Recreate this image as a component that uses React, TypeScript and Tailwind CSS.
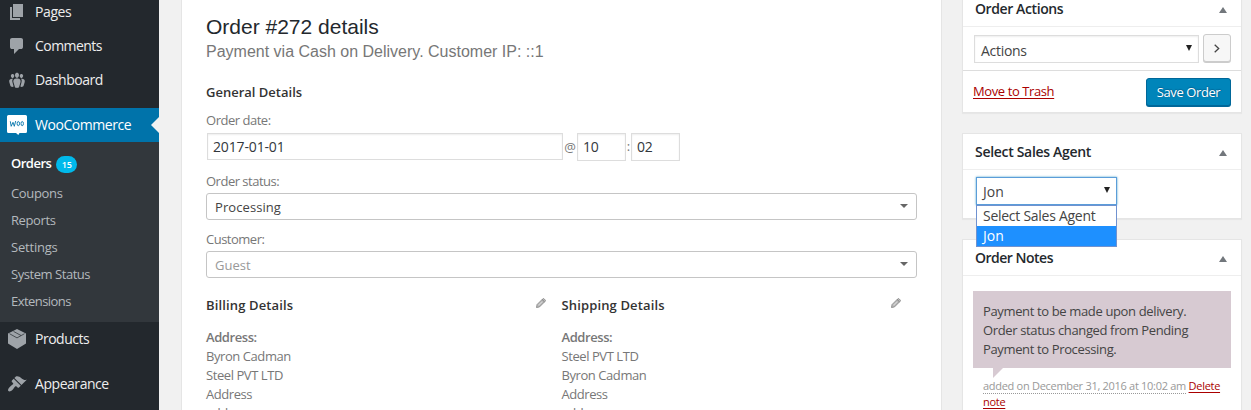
import type { ReactNode } from "react";

const menuText = "font-['Open_Sans',sans-serif] text-[14px] leading-[18px] text-[#eee]";

function Dash({ d, className = "" }: { d: string[]; className?: string }) {
  return (
    <svg viewBox="0 0 20 20" className={`h-5 w-5 shrink-0 ${className}`} fill="#9ea3a8">
      {d.map((p) => (
        <path key={p} d={p} />
      ))}
    </svg>
  );
}

function MenuRow({ icon, label, tracking }: { icon: ReactNode; label: string; tracking: string }) {
  return (
    <div className="flex h-[34px] shrink-0 items-center pl-[7px]">
      {icon}
      <span className={`ml-2 ${menuText} ${tracking}`}>{label}</span>
    </div>
  );
}

const PAGES = ["M6 15V2h10v13H6zm-1 1h8v2H3V5h2v11z"];
const COMMENTS = [
  "M5 2h9q.82 0 1.41.59T16 4v7q0 .82-.59 1.41T14 13h-2l-5 5v-5H5q-.82 0-1.41-.59T3 11V4q0-.82.59-1.41T5 2z",
];
const GROUPS = [
  "M8.03 4.46c-.29 1.28.55 3.46 1.97 3.46 1.41 0 2.25-2.18 1.96-3.46-.22-.98-1.08-1.63-1.96-1.63-.89 0-1.74.65-1.97 1.63z",
  "M3.9 5.36c-.25 1.08.47 2.93 1.67 2.93s1.92-1.85 1.67-2.93c-.19-.83-.92-1.39-1.67-1.39s-1.48.56-1.67 1.39z",
  "M12.76 5.36c-.25 1.08.47 2.93 1.66 2.93 1.2 0 1.92-1.85 1.67-2.93-.19-.83-.92-1.39-1.67-1.39-.74 0-1.47.56-1.66 1.39z",
  "M12.17 16.79l1.25-4.3C14.2 10 12.71 8.47 10 8.47c-2.72 0-4.21 1.53-3.44 4.02l1.26 4.3C8.05 17.51 9 18 10 18c.98 0 1.94-.49 2.17-1.21z",
  "M6.1 8.85C5 9.8 5.2 11.3 5.6 12.7l1.05 3.8c-.4.3-.9.4-1.4.4-.85 0-1.65-.41-1.85-1.03l-1.07-3.65c-.65-2.11.61-3.4 2.92-3.4.3 0 .6 0 .85.03z",
  "M13.9 8.85c1.1.95.9 2.45.5 3.85l-1.05 3.8c.4.3.9.4 1.4.4.85 0 1.65-.41 1.85-1.03l1.07-3.65c.65-2.11-.61-3.4-2.92-3.4-.3 0-.6 0-.85.03z",
];
const BRUSH = [
  "M14.48 11.06L7.41 3.99l1.5-1.5c.5-.56 2.3-.47 3.51.32 1.21.8 1.43 1.28 2.91 2.1 1.18.64 2.45 1.26 4.45.85z",
  "M13.77 11.77L6.7 4.7 4.93 6.47c-.39.39-.39 1.02 0 1.41l1.06 1.06c.39.39.39 1.03 0 1.42-.6.6-1.43 1.11-2.21 1.69-.35.26-.7.53-1.01.84C1.43 14.23.4 16.08 1.4 17.07c.99 1 2.84-.03 4.18-1.36.31-.31.58-.66.85-1.02.57-.78 1.08-1.61 1.69-2.21.39-.39 1.02-.39 1.41 0l1.06 1.06c.39.39 1.02.39 1.41 0z",
];

function WooIcon() {
  return (
    <svg viewBox="0 0 20 20" className="h-5 w-5 shrink-0">
      <path d="M1.500 0h17a1.500 1.500 0 0 1 1.500 1.500v15a1.500 1.500 0 0 1-1.500 1.500H12.500l-1.200 2-2.300-2H1.500A1.500 1.500 0 0 1 0 16.500v-15A1.500 1.500 0 0 1 1.500 0z" fill="#fff" />
      <path d="M3.300 6.300l.9 5 1.800-4 1.300 4 1.400-5.300" fill="none" stroke="#0073aa" strokeWidth=".9" />
      <ellipse cx="11.300" cy="8.600" rx="1.200" ry="2.100" fill="none" stroke="#0073aa" strokeWidth=".9" />
      <ellipse cx="15.200" cy="8.600" rx="1.200" ry="2.100" fill="none" stroke="#0073aa" strokeWidth=".9" />
    </svg>
  );
}

function BoxIcon() {
  return (
    <svg viewBox="0 0 20 22" className="h-[22px] w-5 shrink-0">
      <path d="M10 1l9 4.500v10L10 21l-9-5.500v-10z" fill="#9ea3a8" />
      <path d="M2.500 5.700L10 9.900l7.500-4.200M6.500 3.400l7.500 4.100" fill="none" stroke="#23282d" strokeWidth=".7" />
    </svg>
  );
}

function Pencil() {
  return (
    <svg viewBox="0 0 10 10" className="h-[10px] w-[10px]">
      <path d="M.5 9.500l.6-3L6.600 1l1-.6 2 2-.6 1L3.500 8.900z" fill="#bbb" stroke="#888" strokeWidth=".9" />
      <path d="M6.100 1.500l2.400 2.400" stroke="#777" strokeWidth=".9" />
      <path d="M2.500 7.300L6 3.800" stroke="#eee" strokeWidth=".6" />
    </svg>
  );
}

const subs: [string, string][] = [
  ["Coupons", "tracking-[-0.35px]"],
  ["Reports", "tracking-[-0.4px]"],
  ["Settings", "tracking-[-0.2px]"],
  ["System Status", "tracking-[-0.45px]"],
  ["Extensions", "tracking-[-0.55px]"],
];

function Sidebar() {
  return (
    <nav className="flex w-[159px] shrink-0 flex-col overflow-hidden bg-[#23282d]">
      <div className="-mt-[5px] flex flex-col">
        <MenuRow icon={<Dash d={PAGES} />} label="Pages" tracking="tracking-[-0.4px]" />
        <MenuRow icon={<Dash d={COMMENTS} />} label="Comments" tracking="tracking-[-0.55px]" />
        <MenuRow icon={<Dash d={GROUPS} />} label="Dashboard" tracking="tracking-[-0.5px]" />
      </div>
      <div className="mt-[11px] flex h-[34px] shrink-0 items-center justify-between bg-[#0073aa] pl-[7px]">
        <WooIcon />
        <span className={`mr-auto ml-2 ${menuText} tracking-[-0.45px] text-white`}>WooCommerce</span>
        <svg viewBox="0 0 8 16" className="h-4 w-2">
          <path d="M8 0v16L0 8z" fill="#f1f1f1" />
        </svg>
      </div>
      <div className="flex h-[180px] shrink-0 flex-col bg-[#32373c] pt-2 pl-[11px] font-['Open_Sans',sans-serif] text-[13px] leading-[27px] text-[#b4b9be]">
        <div className="mb-px flex h-[29px] items-center">
          <span className="-mt-0.5 font-semibold tracking-[-0.5px] text-white">Orders</span>
          <span className="ml-[5px] flex h-[17px] w-[21px] items-center justify-center rounded-full bg-[#00b9eb] text-[9px] font-semibold text-white">15</span>
        </div>
        {subs.map(([s, t]) => (
          <div key={s} className={`h-[27px] ${t}`}>
            {s}
          </div>
        ))}
      </div>
      <MenuRow icon={<BoxIcon />} label="Products" tracking="tracking-[-0.5px]" />
      <div className="h-[11px] shrink-0" />
      <MenuRow icon={<Dash d={BRUSH} />} label="Appearance" tracking="tracking-[-0.45px]" />
    </nav>
  );
}

function SelectBox({ text, className }: { text: string; className: string }) {
  return (
    <div className={`flex h-[27px] w-[711px] items-center justify-between rounded-[3px] border border-[#c5c5c5] bg-white pr-2 pl-2 ${className}`}>
      <span className="pt-0.5">{text}</span>
      <svg viewBox="0 0 8 4" className="mb-px h-1 w-2">
        <path d="M0 0h8L4 4z" fill="#666" />
      </svg>
    </div>
  );
}

const inputBox = "flex items-center border border-[#ddd] bg-white px-[5px] text-[14px] tracking-[-0.15px] text-[#32373c] shadow-[inset_0_1px_2px_rgba(0,0,0,0.07)]";

function Address({ title, lines, className }: { title: string; lines: string[]; className: string }) {
  return (
    <section className={className}>
      <div className="flex h-[18px] items-center justify-between">
        <h4 className="pt-0.5 text-[13px] font-semibold tracking-[0.14px] text-[#333]">{title}</h4>
        <span className="-mt-1">
          <Pencil />
        </span>
      </div>
      <div className="mt-[14px] leading-[19px] tracking-[-0.43px]">
        <div className="font-semibold">Address:</div>
        {lines.map((l, i) => (
          <div key={i}>{l}</div>
        ))}
      </div>
    </section>
  );
}

function OrderPanel() {
  return (
    <main className="ml-[22px] w-[761px] shrink-0 overflow-hidden border-x border-[#e5e5e5] bg-white pl-6 font-['Open_Sans',sans-serif] text-[13px] text-[#777]">
      <h2 className="mt-[14px] font-['Liberation_Sans',sans-serif] text-[21px] leading-[26px] text-[#23282d]">Order #272 details</h2>
      <p className="mt-px font-['Liberation_Sans',sans-serif] text-[16px] leading-[22px] text-[#777]">Payment via Cash on Delivery. Customer IP: ::1</p>
      <h4 className="mt-5 text-[13px] leading-[18px] font-semibold text-[#333]">General Details</h4>
      <div className="mt-[10px] leading-[18px] tracking-[-0.48px]">Order date:</div>
      <div className="mt-1 ml-px flex h-7 items-start">
        <div className={`${inputBox} h-[27px] w-[356px]`}>2017-01-01</div>
        <span className="w-[14px] pt-[5px] text-center">@</span>
        <div className={`${inputBox} h-7 w-[49px] pb-px`}>10</div>
        <span className="w-[5px] pt-1 text-center">:</span>
        <div className={`${inputBox} h-7 w-[49px] pb-px`}>02</div>
      </div>
      <div className="mt-[11px] leading-[18px] tracking-[-0.5px]">Order status:</div>
      <SelectBox text="Processing" className="mt-[3px] text-[#444] tracking-[0.08px]" />
      <div className="mt-[10px] leading-[18px] tracking-[-0.5px]">Customer:</div>
      <SelectBox text="Guest" className="mt-[3px] text-[#999] tracking-[0.05px]" />
      <div className="mt-[18px] flex">
        <Address className="w-[340px]" title="Billing Details" lines={["Byron Cadman", "Steel PVT LTD", "Address", "address"]} />
        <Address className="ml-[15.5px] w-[339.5px]" title="Shipping Details" lines={["Steel PVT LTD", "Byron Cadman", "Address", "address"]} />
      </div>
    </main>
  );
}

function BoxHead({ title, tracking }: { title: string; tracking: string }) {
  return (
    <div className="flex h-9 items-center justify-between border-b border-[#eee] pr-[14px] pl-3">
      <h3 className={`text-[14px] font-semibold text-[#23282d] ${tracking}`}>{title}</h3>
      <svg viewBox="0 0 8 6" className="mt-0.5 h-1.5 w-2">
        <path d="M4 0l4 6H0z" fill="#72777c" />
      </svg>
    </div>
  );
}

function DownArrow() {
  return (
    <svg viewBox="0 0 6 6" className="mb-0.5 h-1.5 w-1.5">
      <path d="M0 0h6L3 6z" fill="#222" />
    </svg>
  );
}

const card = "w-[280px] border border-[#e5e5e5] bg-white shadow-[0_1px_1px_rgba(0,0,0,0.04)]";

function RightColumn() {
  return (
    <aside className="ml-5 flex w-[280px] shrink-0 flex-col font-['Open_Sans',sans-serif] text-[13px] text-[#444]">
      <section className={`-mt-[10px] h-[123px] shrink-0 ${card}`}>
        <BoxHead title="Order Actions" tracking="tracking-[-0.4px]" />
        <div className="flex h-11 border-b border-[#ddd] pt-[8px] pl-[11px]">
          <div className="flex h-7 w-[225px] items-center justify-between border border-[#ddd] pr-[6px] pl-[6px] text-[14px] shadow-[inset_0_1px_2px_rgba(0,0,0,0.07)]">
            <span className="pt-0.5 tracking-[-0.3px]">Actions</span>
            <DownArrow />
          </div>
          <div className="-mt-px ml-1 flex h-[28px] w-7 items-center justify-center rounded-[3px] border border-[#ccc] bg-[#f7f7f7] shadow-[0_1px_0_#ccc]">
            <svg viewBox="0 0 6 9" className="h-[9px] w-1.5">
              <path d="M.7.7l4 3.800-4 3.800" fill="none" stroke="#444" strokeWidth="1.300" />
            </svg>
          </div>
        </div>
        <div className="flex items-center justify-between pt-[7px] pr-[10px] pl-[10px]">
          <a className="tracking-[-0.4px] text-[#a00] underline underline-offset-2">Move to Trash</a>
          <button className="h-[28px] w-[85px] rounded-[3px] border border-[#006799] bg-[#0085ba] pt-px text-[13px] tracking-[-0.4px] text-white shadow-[0_1px_0_#006799] [text-shadow:0_-1px_1px_#006799,1px_0_1px_#006799]">Save Order</button>
        </div>
      </section>
      <section className={`mt-5 h-[86px] shrink-0 ${card}`}>
        <BoxHead title="Select Sales Agent" tracking="tracking-[-0.31px]" />
        <div className="relative pt-[7px] pl-[13px]">
          <div className="flex h-7 w-[141px] items-center justify-between border border-[#5b9dd9] pr-[6px] pl-[6px] text-[14px] shadow-[0_0_2px_rgba(30,140,190,0.8)]">
            <span>Jon</span>
            <DownArrow />
          </div>
          <div className="absolute top-[35px] left-[13px] z-10 h-[42px] w-[141px] border border-[#7092d0] bg-white text-[14px] leading-[20px] tracking-[-0.27px]">
            <div className="h-5 pl-[6px]">Select Sales Agent</div>
            <div className="h-5 bg-[#1e90ff] pl-[6px] tracking-normal text-white">Jon</div>
          </div>
        </div>
      </section>
      <section className={`mt-5 h-[190px] shrink-0 ${card}`}>
        <BoxHead title="Order Notes" tracking="tracking-[-0.5px]" />
        <div className="pt-[15px] pl-[10px]">
          <div className="h-[77px] w-[258px] bg-[#d7cad2] pt-[11px] pl-[10px] leading-[19px] tracking-[-0.36px]">
            <div>Payment to be made upon delivery.</div>
            <div>Order status changed from Pending</div>
            <div>Payment to Processing.</div>
          </div>
          <svg viewBox="0 0 10 10" className="ml-5 h-[10px] w-[10px]">
            <path d="M0 0h10L0 10z" fill="#d7cad2" />
          </svg>
          <div className="ml-[10px] text-[11px] leading-4 tracking-[-0.29px] text-[#999]">
            <div className="whitespace-nowrap">
              <span className="border-b border-dotted border-[#999]">added on December 31, 2016 at 10:02 am</span>{" "}
              <a className="text-[#a00] underline underline-offset-2">Delete</a>
            </div>
            <a className="text-[#a00] underline underline-offset-2">note</a>
          </div>
        </div>
      </section>
    </aside>
  );
}

export default function App() {
  return (
    <div className="flex h-[410px] w-[1251px] overflow-hidden bg-[#f1f1f1]">
      <Sidebar />
      <OrderPanel />
      <RightColumn />
    </div>
  );
}
